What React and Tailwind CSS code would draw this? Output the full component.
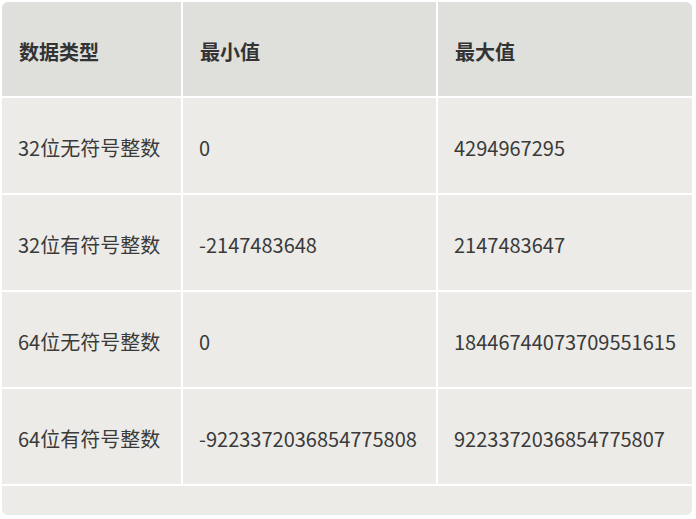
const rows = [
  ["32位无符号整数", "0", "4294967295"],
  ["32位有符号整数", "-2147483648", "2147483647"],
  ["64位无符号整数", "0", "18446744073709551615"],
  ["64位有符号整数", "-9223372036854775808", "9223372036854775807"],
];

export default function App() {
  return (
    <div className="h-[519px] w-[696px] bg-white p-[2px] font-['Noto_Sans_CJK_SC',sans-serif] text-[20px] text-[#3a3a3a]">
      <div className="grid h-[513px] w-[690px] grid-cols-[179px_253px_254px] grid-rows-[94px_95px_95px_95px_95px_29px] gap-[2px] overflow-hidden rounded-[6px] bg-white">
        {["数据类型", "最小值", "最大值"].map((h) => (
          <div
            key={h}
            className="flex items-center bg-[#dfe0dc] pl-[17px] pt-[6px] font-bold text-[#333]"
          >
            {h}
          </div>
        ))}
        {rows.map((row) =>
          row.map((cell, i) => (
            <div
              key={row[0] + i}
              className="flex items-center bg-[#ecebe7] pl-[16px] pt-[4px]"
            >
              {cell}
            </div>
          ))
        )}
        <div className="col-span-3 bg-[#ecebe7]" />
      </div>
    </div>
  );
}
